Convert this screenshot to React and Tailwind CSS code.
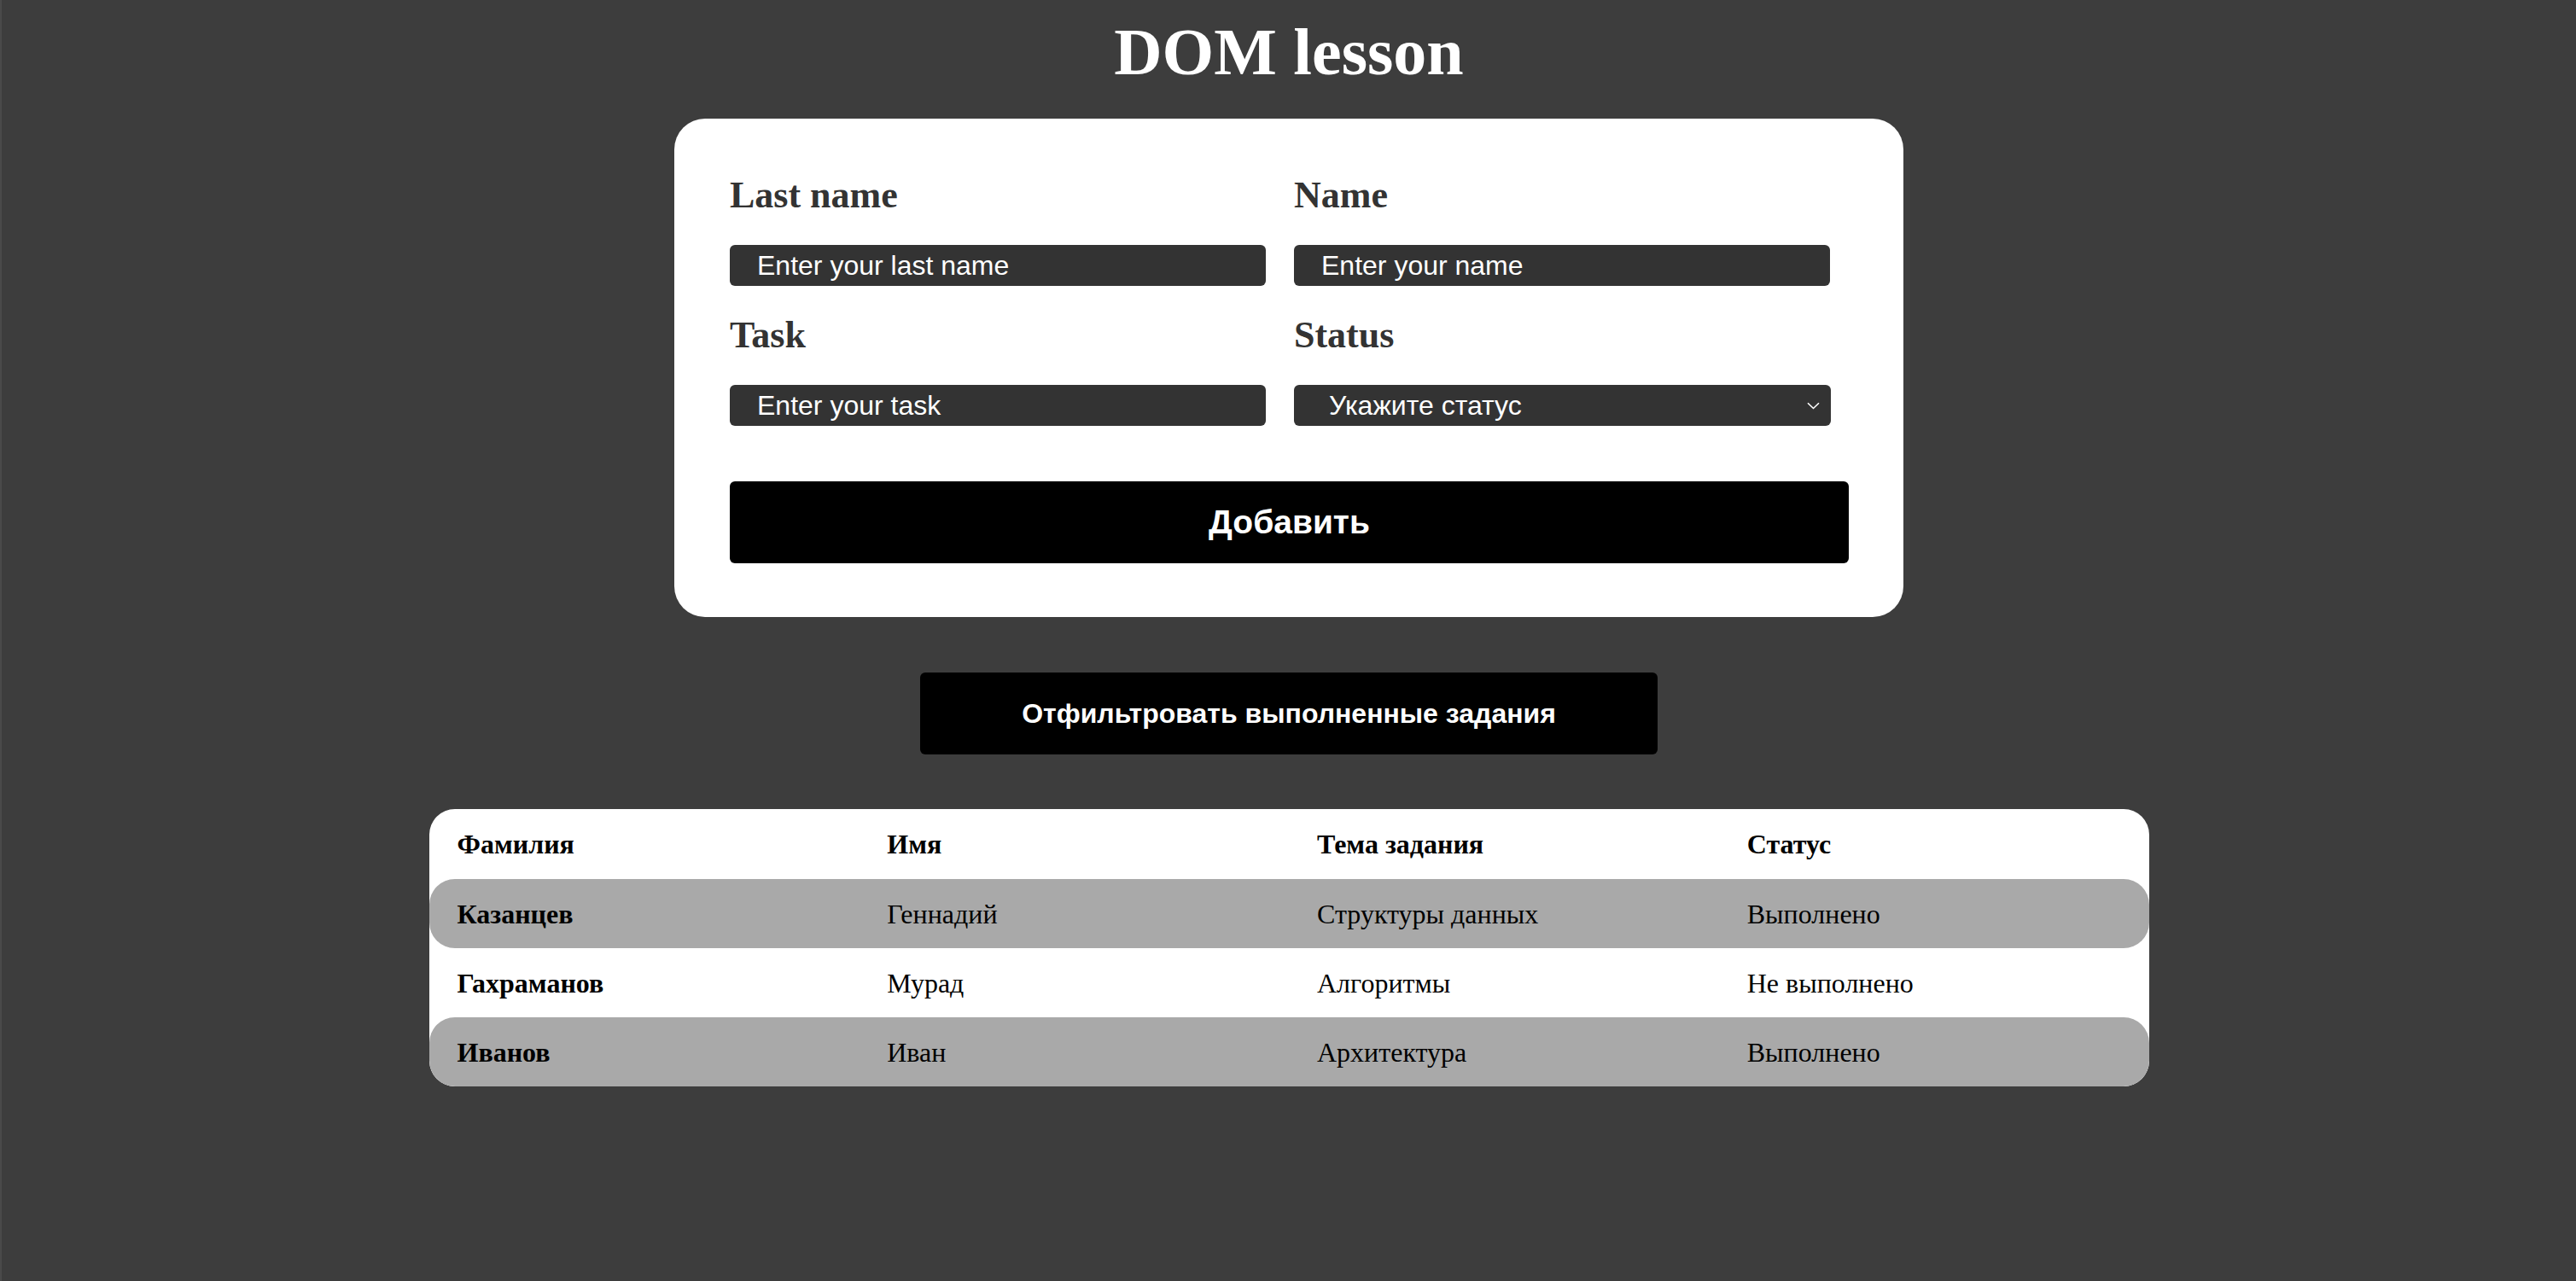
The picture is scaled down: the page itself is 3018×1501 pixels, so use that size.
import React from "react";

const serif = { fontFamily: '"Liberation Serif", "Times New Roman", serif' };

function Field({ label, placeholder, select }) {
  return (
    <div className="flex flex-col">
      <div
        className="text-[44px] font-bold leading-none text-[#333333]"
        style={serif}
      >
        {label}
      </div>
      {select ? (
        <div className="relative mt-[36px] h-[48px] w-[629px] rounded-[6px] bg-[#333333]">
          <div className="flex h-full items-center pl-[41px] text-[32px] leading-none text-white font-['Liberation_Sans',Arial,sans-serif]">
            {placeholder}
          </div>
          <svg
            className="absolute right-[13px] top-[20px]"
            width="15"
            height="9"
            viewBox="0 0 15 9"
            fill="none"
          >
            <path d="M1 1.2 L7.5 7.5 L14 1.2" stroke="#ffffff" strokeWidth="1.6" />
          </svg>
        </div>
      ) : (
        <input
          readOnly
          placeholder={placeholder}
          className="mt-[36px] h-[48px] w-[628px] rounded-[6px] bg-[#333333] pl-[32px] text-[32px] text-white placeholder:text-white outline-none font-['Liberation_Sans',Arial,sans-serif]"
        />
      )}
    </div>
  );
}

const rows = [
  ["Казанцев", "Геннадий", "Структуры данных", "Выполнено"],
  ["Гахраманов", "Мурад", "Алгоритмы", "Не выполнено"],
  ["Иванов", "Иван", "Архитектура", "Выполнено"],
];

export default function App() {
  return (
    <div className="min-h-screen w-full bg-[#3d3d3d] border-l-2 border-[#4a4a4a] flex flex-col items-center">
      <h1
        className="mt-[22px] text-[78px] font-bold leading-none text-white"
        style={serif}
      >
        DOM lesson
      </h1>

      <div className="mt-[39px] w-[1440px] rounded-[36px] bg-white pl-[65px] pr-[64px] pt-[68px] pb-[63px]">
        <div className="grid grid-cols-[628px_629px] gap-x-[33px] gap-y-[36px]">
          <Field label="Last name" placeholder="Enter your last name" />
          <Field label="Name" placeholder="Enter your name" />
          <Field label="Task" placeholder="Enter your task" />
          <Field label="Status" placeholder="Укажите статус" select />
        </div>
        <button className="mt-[65px] flex h-[96px] w-full items-center justify-center rounded-[6px] bg-black text-[39px] font-bold text-white font-['Liberation_Sans',Arial,sans-serif]">
          Добавить
        </button>
      </div>

      <button className="mt-[65px] flex h-[96px] w-[864px] items-center justify-center rounded-[6px] bg-black text-[32px] font-bold text-white font-['Liberation_Sans',Arial,sans-serif]">
        Отфильтровать выполненные задания
      </button>

      <div
        className="mt-[64px] w-[2015px] overflow-hidden rounded-[30px] bg-white text-[32px] text-black"
        style={serif}
      >
        <div className="grid h-[82px] grid-cols-4 items-center font-bold">
          <div className="pl-[33px]">Фамилия</div>
          <div className="pl-[33px]">Имя</div>
          <div className="pl-[33px]">Тема задания</div>
          <div className="pl-[33px]">Статус</div>
        </div>
        {rows.map((r, i) => (
          <div
            key={i}
            className={
              "grid h-[81px] grid-cols-4 items-center rounded-[30px] " +
              (i % 2 === 0 ? "bg-[#a9a9a9]" : "bg-white")
            }
          >
            <div className="pl-[33px] font-bold">{r[0]}</div>
            <div className="pl-[33px]">{r[1]}</div>
            <div className="pl-[33px]">{r[2]}</div>
            <div className="pl-[33px]">{r[3]}</div>
          </div>
        ))}
      </div>
    </div>
  );
}
